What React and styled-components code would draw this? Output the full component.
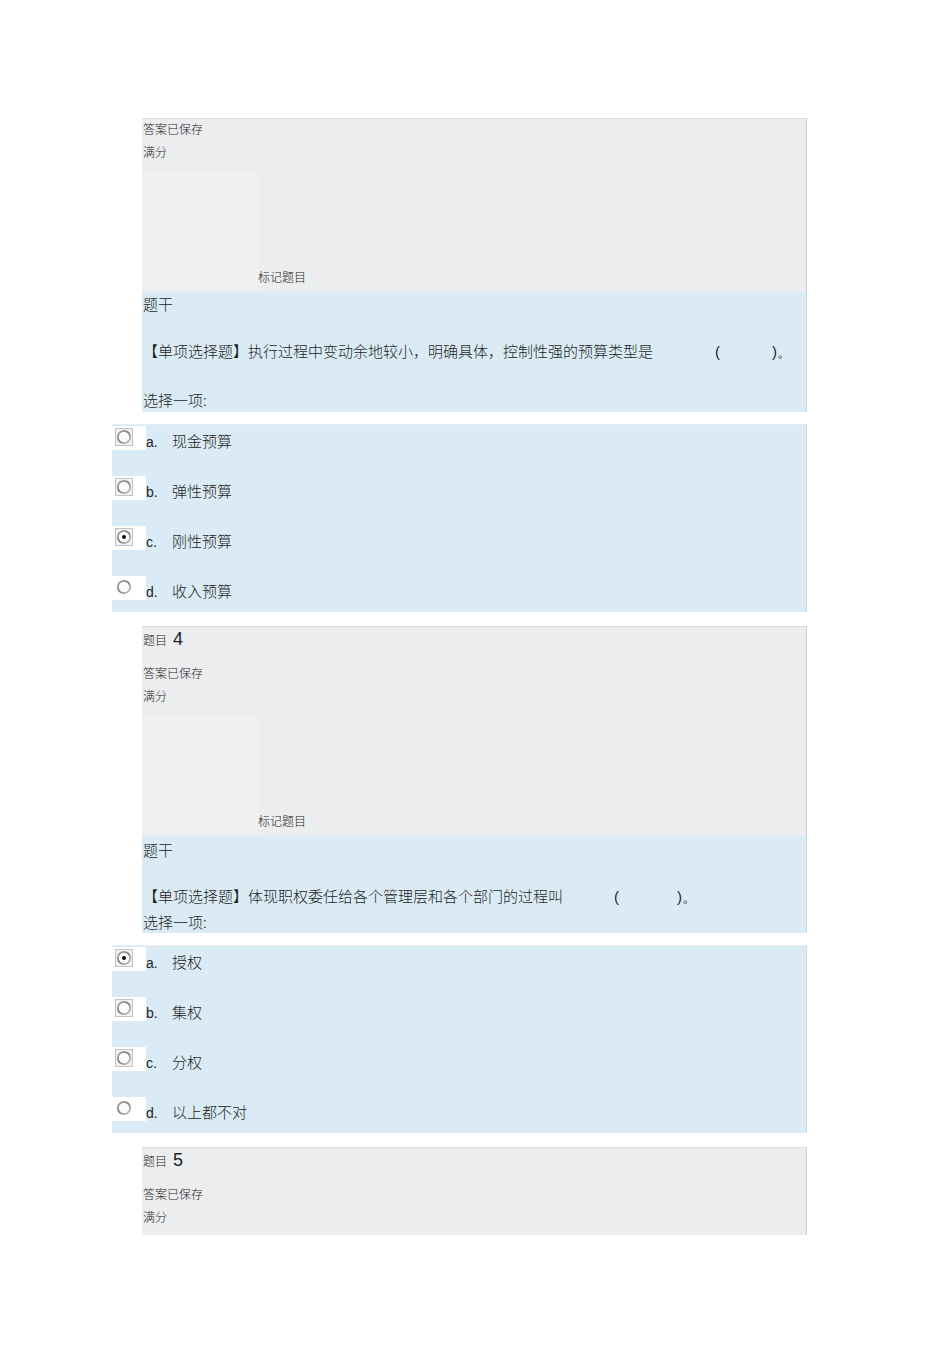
import React from 'react';
import styled, { createGlobalStyle } from 'styled-components';

const GlobalStyle = createGlobalStyle`
  body {
    margin: 0;
    background: #ffffff;
    font-family: "Noto Sans CJK SC", "Liberation Sans", sans-serif;
    font-weight: 300;
    color: #1e1e1e;
  }
`;

const questions = [
  {
    id: 3,
    showHeader: false,
    text: '【单项选择题】执行过程中变动余地较小，明确具体，控制性强的预算类型是',
    blankBefore: 62,
    blankInside: 52,
    stemGaps: [27, 28],
    stemPad: [2, 2],
    options: [
      { key: 'a', label: '现金预算' },
      { key: 'b', label: '弹性预算' },
      { key: 'c', label: '刚性预算', checked: true },
      { key: 'd', label: '收入预算' },
    ],
  },
  {
    id: 4,
    showHeader: true,
    text: '【单项选择题】体现职权委任给各个管理层和各个部门的过程叫',
    blankBefore: 51,
    blankInside: 58,
    stemGaps: [26, 5],
    stemPad: [4, 1],
    options: [
      { key: 'a', label: '授权', checked: true },
      { key: 'b', label: '集权' },
      { key: 'c', label: '分权' },
      { key: 'd', label: '以上都不对' },
    ],
  },
];

function Radio({ checked, framed }) {
  return (
    <RadioBox>
      <svg width="18" height="18" viewBox="0 0 18 18">
        <defs>
          <linearGradient id="ring" x1="0" y1="0" x2="1" y2="1">
            <stop offset="0" stopColor="#a9a9a9" />
            <stop offset="0.5" stopColor="#7d7d7d" />
            <stop offset="1" stopColor="#cfcfcf" />
          </linearGradient>
        </defs>
        {framed && (
          <rect x="0.5" y="0.5" width="17" height="17" fill="#f2f2f2" stroke="#c3c3c3" />
        )}
        <circle cx="9" cy="9" r="6.2" fill="#fbfbfb" stroke="url(#ring)" strokeWidth="1.8" />
        {checked && <circle cx="9" cy="9" r="2" fill="#111" />}
      </svg>
    </RadioBox>
  );
}

function InfoPanel({ id, showHeader, short }) {
  return (
    <Info $short={short}>
      {showHeader && (
        <Header>
          <SmallText>题目</SmallText>
          <Number>{id}</Number>
        </Header>
      )}
      <InfoLine>答案已保存</InfoLine>
      <InfoLine>满分</InfoLine>
      {!short && (
        <FlagRow>
          <FlagBox />
          <FlagLabel>标记题目</FlagLabel>
        </FlagRow>
      )}
    </Info>
  );
}

function Question({ q }) {
  return (
    <>
      <InfoPanel id={q.id} showHeader={q.showHeader} />
      <Stem $pad={q.stemPad}>
        <StemLine>题干</StemLine>
        <StemLine $gap={q.stemGaps[0]}>
          {q.text}
          <Paren $left={q.blankBefore}>(</Paren>
          <Paren $left={q.blankInside}>)。</Paren>
        </StemLine>
        <StemLine $gap={q.stemGaps[1]}>选择一项:</StemLine>
      </Stem>
      <Answers>
        {q.options.map((o, i) => (
          <OptionRow key={o.key}>
            <Radio checked={o.checked} framed={i < q.options.length - 1} />
            <OptionText>
              <Letter>{o.key}.</Letter>
              {o.label}
            </OptionText>
          </OptionRow>
        ))}
      </Answers>
    </>
  );
}

export default function App() {
  return (
    <>
      <GlobalStyle />
      <Page>
        {questions.map((q) => (
          <Question key={q.id} q={q} />
        ))}
        <InfoPanel id={5} showHeader short />
      </Page>
    </>
  );
}

const Page = styled.div`
  width: 695px;
  padding: 118px 0 0 112px;
  display: flex;
  flex-direction: column;
`;

const Info = styled.div`
  margin-left: 30px;
  background: #ecedef;
  border-top: 1px solid #dcdcdc;
  border-right: 1px solid #cfcfcf;
  padding: 0 0 ${(p) => (p.$short ? '5px' : '2px')} 1px;
`;

const Header = styled.div`
  display: flex;
  align-items: baseline;
  height: 26px;
  margin-bottom: 10px;
  padding-top: 2px;
  box-sizing: border-box;
`;

const SmallText = styled.span`
  font-size: 12px;
`;

const Number = styled.span`
  font-family: "Liberation Sans", Arial, sans-serif;
  font-weight: 400;
  font-size: 18px;
  margin-left: 6px;
`;

const InfoLine = styled.div`
  font-size: 12px;
  line-height: 20px;
  margin-bottom: 3px;
`;

const FlagRow = styled.div`
  display: flex;
  align-items: flex-end;
  margin-top: 8px;
`;

const FlagBox = styled.div`
  width: 115px;
  height: 120px;
  background: #f0f0f0;
`;

const FlagLabel = styled.span`
  font-size: 12px;
  line-height: 16px;
  margin-bottom: 5px;
`;

const Stem = styled.div`
  margin-left: 30px;
  background: #dbebf5;
  border-right: 1px solid #cfd9df;
  padding: ${(p) => p.$pad[0]}px 0 ${(p) => p.$pad[1]}px 1px;
  margin-bottom: 12px;
`;

const StemLine = styled.div`
  font-size: 15px;
  line-height: 20px;
  margin-top: ${(p) => p.$gap || 0}px;
  white-space: nowrap;
`;

const Paren = styled.span`
  display: inline-block;
  margin-left: ${(p) => p.$left}px;
  font-family: "Liberation Sans", Arial, sans-serif;
  font-weight: 400;
`;

const Answers = styled.div`
  background: #dbebf5;
  border-top: 1px solid #e6eef3;
  border-right: 1px solid #cfd9df;
  padding: 1px 0 10px;
  margin-bottom: 14px;
  display: flex;
  flex-direction: column;
  gap: 24px;
`;

const OptionRow = styled.div`
  display: flex;
  align-items: flex-start;
  height: 26px;
`;

const RadioBox = styled.div`
  width: 34px;
  height: 24px;
  background: #ffffff;
  display: flex;
  align-items: flex-start;
  padding: 2px 0 0 3px;
  box-sizing: border-box;
`;

const OptionText = styled.div`
  padding-top: 5px;
  font-size: 15px;
  line-height: 20px;
  display: flex;
  align-items: baseline;
`;

const Letter = styled.span`
  font-family: "Liberation Sans", Arial, sans-serif;
  font-weight: 400;
  font-size: 14px;
  width: 26px;
`;
